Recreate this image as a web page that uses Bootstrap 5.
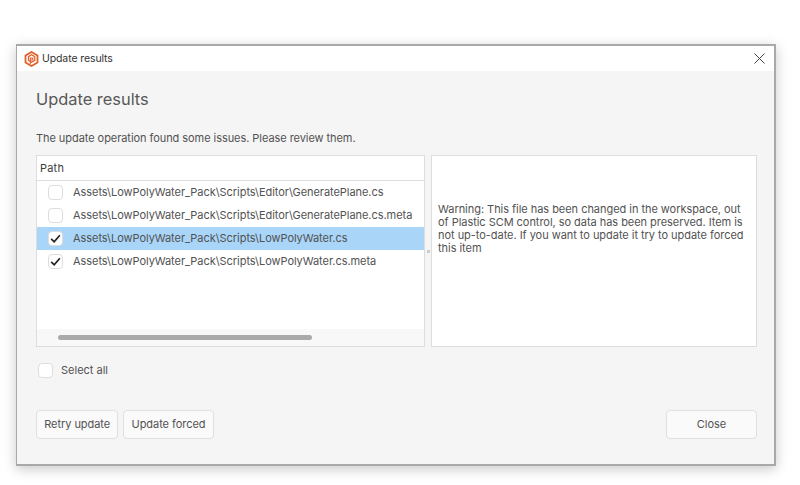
<!DOCTYPE html>
<html lang="en"><head><meta charset="utf-8"><title>Update results</title>
<link href="https://cdn.jsdelivr.net/npm/bootstrap@5.3.0/dist/css/bootstrap.min.css" rel="stylesheet">
<style>
html,body{height:100%;background:#fff;overflow:hidden}
body{font-family:Inter,"Liberation Sans",sans-serif;font-size:11px;color:#525252;padding:44px 24px 0 16px}
.dlg{width:760px;height:422px;border:1px solid #a9a9a9;border-width:2px 2px 2px 1px;background:#f5f5f5;box-shadow:0 3px 12px rgba(0,0,0,.22)}
.tbar{height:25px;background:#fff;padding-left:7px;color:#333;gap:3px;font-size:10.5px;letter-spacing:-.1px}
.xbtn{margin-left:auto;margin-right:9px;line-height:0}
.bodyw{padding:0 17px 0 19px}
.ttl{font-size:16.4px;font-weight:400;line-height:20px;margin:18px 0 0;color:#585858}
.desc{line-height:14px;margin:22px 0 10px;letter-spacing:-.06px}
.panes{height:192px;gap:6px}
.lst{width:389px;background:#fff;border:1px solid #ddd}
.hdr{height:25px;border-bottom:1px solid #ddd;padding-left:3px;color:#3c3c3c;letter-spacing:.2px}
.itm{height:23px;padding-left:11px;gap:10px;letter-spacing:-.05px}
.itm.sel{background:#a9d5f9}
.cbx{width:15px;height:15px;border:1px solid #ddd;border-radius:4px;background:#fff;flex:none;line-height:0}
.trk{height:17px;background:#f8f8f8;margin-top:auto;padding:6px 0 0 21px}
.thm{width:254px;height:5px;border-radius:3px;background:#aaa}
.grip{width:3px;height:3px;background:#ccc;position:absolute;left:-5px;top:94px}
.det{width:326px;background:#fff;border:1px solid #ddd;padding:0 7px 44px 6px;position:relative;letter-spacing:-.04px;line-height:13.2px}
.sall{margin:15px 0 0;padding-left:2px;gap:8px;height:16px}
.acts{margin-top:32px;gap:5px}
.bt{height:29px;font-size:11px;color:#525252;border:1px solid #e0e0e0;border-radius:4px;background:#fafafa;padding:0 7.200px;letter-spacing:-.05px;--bs-btn-font-size:11px}
.bt.wide{width:91px;padding:0}
</style></head>
<body>
<div class="dlg d-flex flex-column">
  <div class="tbar d-flex align-items-center">
    <svg width="15" height="16" viewBox="0 0 15 16" fill="none" stroke="#e2602a" stroke-width="1.800"><path d="M7.5 1 13.5 4.5v7L7.5 15 1.5 11.500v-7z"/><path d="M7.500 3.800 10.800 5.700v3.600L7.500 11.200 4.500 9.500V5.700z" stroke-width="1.200"/><path d="M6.300 13V7h2.500v2H6.500" stroke-width="1.100"/></svg>
    <span>Update results</span>
    <span class="xbtn"><svg width="11" height="11" viewBox="0 0 11 11" stroke="#444" stroke-width="1"><path d="M.5.5l10 10M10.500.5l-10 10"/></svg></span>
  </div>
  <div class="bodyw flex-grow-1">
    <h1 class="ttl">Update results</h1>
    <p class="desc">The update operation found some issues. Please review them.</p>
    <div class="panes d-flex">
      <div class="lst d-flex flex-column">
        <div class="hdr d-flex align-items-center">Path</div>
        <div class="itm d-flex align-items-center"><span class="cbx"></span><span>Assets\LowPolyWater_Pack\Scripts\Editor\GeneratePlane.cs</span></div>
        <div class="itm d-flex align-items-center"><span class="cbx"></span><span>Assets\LowPolyWater_Pack\Scripts\Editor\GeneratePlane.cs.meta</span></div>
        <div class="itm sel d-flex align-items-center"><span class="cbx"><svg width="13" height="13" viewBox="0 0 12 12" fill="none" stroke="#222" stroke-width="1.600"><path d="M2 6.300 4.800 9 10 3"/></svg></span><span>Assets\LowPolyWater_Pack\Scripts\LowPolyWater.cs</span></div>
        <div class="itm d-flex align-items-center"><span class="cbx"><svg width="13" height="13" viewBox="0 0 12 12" fill="none" stroke="#222" stroke-width="1.600"><path d="M2 6.300 4.800 9 10 3"/></svg></span><span>Assets\LowPolyWater_Pack\Scripts\LowPolyWater.cs.meta</span></div>
        <div class="trk"><div class="thm"></div></div>
      </div>
      <div class="det d-flex align-items-center">
        <span class="grip"></span>
        <span>Warning: This file has been changed in the workspace, out of Plastic SCM control, so data has been preserved. Item is not up-to-date. If you want to update it try to update forced this item</span>
      </div>
    </div>
    <div class="sall d-flex align-items-center"><span class="cbx"></span><span>Select all</span></div>
    <div class="acts d-flex">
      <button type="button" class="btn bt">Retry update</button>
      <button type="button" class="btn bt">Update forced</button>
      <button type="button" class="btn bt wide ms-auto">Close</button>
    </div>
  </div>
</div>
<script src="https://cdn.jsdelivr.net/npm/bootstrap@5.3.0/dist/js/bootstrap.bundle.min.js"></script>
</body></html>
